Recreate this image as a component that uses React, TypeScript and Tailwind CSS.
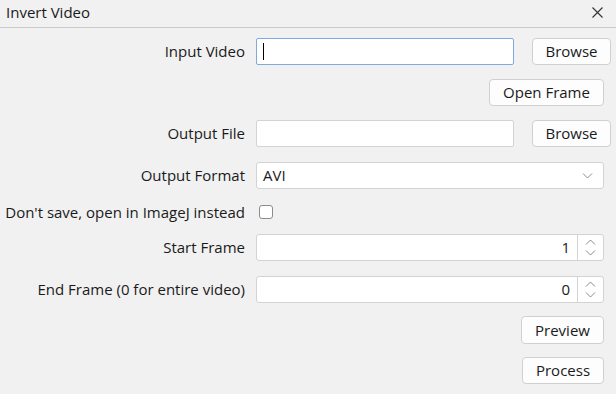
import React from 'react';

const font = { fontFamily: '"Open Sans", "Noto Sans", sans-serif' };

const Btn = ({ children, className }: { children: React.ReactNode; className: string }) => (
  <button className={`flex items-center justify-center bg-[#fdfdfd] border border-[#d0d0d0] rounded-[4px] text-[15px] text-[#1a1a1a] ${className}`}>
    {children}
  </button>
);

const Label = ({ children }: { children: React.ReactNode }) => (
  <div className="w-[246px] shrink-0 text-right text-[15px] text-[#1a1a1a] pr-[1px] whitespace-nowrap">{children}</div>
);

const Chevron = ({ up }: { up?: boolean }) => (
  <svg width="11" height="6" viewBox="0 0 11 6" className="block">
    <path d={up ? 'M1 5.5 L5.5 1 L10 5.5' : 'M1 0.5 L5.5 5 L10 0.5'} fill="none" stroke="#8a8a8a" strokeWidth="1" />
  </svg>
);

const Spin = ({ value }: { value: string }) => (
  <div className="flex w-[348px] h-[27px] bg-white border border-[#d3d3d3] rounded-[3px]">
    <div className="flex-1 flex items-center justify-end pr-[7px] text-[15px] text-[#1a1a1a]">{value}</div>
    <div className="w-[26px] border-l border-[#d3d3d3] flex flex-col items-center justify-center gap-[5px]">
      <Chevron up />
      <Chevron />
    </div>
  </div>
);

export default function App() {
  return (
    <div className="w-[616px] h-[394px] bg-[#f1f1f1] overflow-hidden" style={font}>
      <div className="h-[28px] flex items-center justify-between border-b border-[#c9c9c9] pl-[6px] pr-[13px]">
        <span className="text-[15px] text-[#1a1a1a] leading-none -mt-[2px]">Invert Video</span>
        <svg width="11" height="11" viewBox="0 0 11 11" className="-mt-[3px]">
          <path d="M0.5 0.5 L10.5 10.5 M10.5 0.5 L0.5 10.5" stroke="#333" strokeWidth="1.1" />
        </svg>
      </div>

      <div className="flex flex-col">
        <div className="flex items-center h-[27px] mt-[10px]">
          <Label>Input Video</Label>
          <div className="ml-[10px] w-[258px] h-[27px] bg-white border border-[#7fabdc] rounded-[2px] flex items-center pl-[6px]">
            <div className="w-[1px] h-[17px] bg-black" />
          </div>
          <Btn className="ml-[18px] w-[79px] h-[27px]">Browse</Btn>
        </div>

        <div className="flex justify-end pr-[12px] mt-[14px]">
          <Btn className="w-[115px] h-[27px]">Open Frame</Btn>
        </div>

        <div className="flex items-center h-[27px] mt-[14px]">
          <Label>Output File</Label>
          <div className="ml-[10px] w-[258px] h-[27px] bg-white border border-[#d3d3d3] rounded-[2px]" />
          <Btn className="ml-[18px] w-[79px] h-[27px]">Browse</Btn>
        </div>

        <div className="flex items-center h-[27px] mt-[15px]">
          <Label>Output Format</Label>
          <div className="ml-[10px] w-[348px] h-[27px] bg-white border border-[#d3d3d3] rounded-[3px] flex items-center justify-between pl-[6px] pr-[10px]">
            <span className="text-[15px] text-[#1a1a1a]">AVI</span>
            <Chevron />
          </div>
        </div>

        <div className="flex items-center h-[16px] mt-[15px]">
          <Label>Don't save, open in ImageJ instead</Label>
          <div className="ml-[13px] w-[14px] h-[14px] bg-white border border-[#8c8c8c] rounded-[3px]" />
        </div>

        <div className="flex items-center h-[27px] mt-[14px]">
          <Label>Start Frame</Label>
          <div className="ml-[10px]">
            <Spin value="1" />
          </div>
        </div>

        <div className="flex items-center h-[27px] mt-[15px]">
          <Label>End Frame (0 for entire video)</Label>
          <div className="ml-[10px]">
            <Spin value="0" />
          </div>
        </div>

        <div className="flex justify-end pr-[12px] mt-[13px]">
          <Btn className="w-[83px] h-[28px]">Preview</Btn>
        </div>

        <div className="flex justify-end pr-[12px] mt-[13px]">
          <Btn className="w-[82px] h-[27px]">Process</Btn>
        </div>
      </div>
    </div>
  );
}
